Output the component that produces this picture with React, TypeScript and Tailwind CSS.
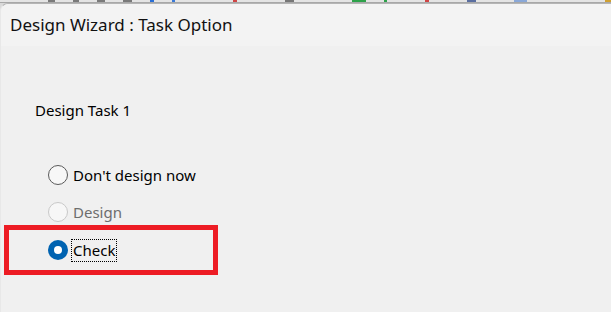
const font = { fontFamily: '"Noto Sans", "Open Sans", sans-serif' };

function Radio({ state }: { state: "off" | "disabled" | "on" }) {
  if (state === "on") {
    return (
      <span className="flex h-[20px] w-[20px] items-center justify-center rounded-full bg-[#0063b1]">
        <span className="h-[8px] w-[8px] rounded-full bg-white" />
      </span>
    );
  }
  return (
    <span
      className={
        state === "off"
          ? "h-[20px] w-[20px] rounded-full border border-[#5a5a5a] bg-[#f7f7f7]"
          : "h-[20px] w-[20px] rounded-full border border-[#c9c9c9] bg-[#f7f7f7]"
      }
    />
  );
}

export default function App() {
  return (
    <div className="flex h-[312px] w-[611px] flex-col overflow-hidden bg-[#d9d9d9]" style={font}>
      {/* strip of the app toolbar behind the dialog */}
      <div className="flex h-[3px] shrink-0 items-end gap-[18px] border-b border-[#a8a8a8] bg-[#e4e4e4] pl-[48px]">
        <span className="h-[2px] w-[8px] bg-[#7a7a7a]" />
        <span className="h-[2px] w-[6px] bg-[#7a7a7a]" />
        <span className="h-[2px] w-[8px] bg-[#7a7a7a]" />
        <span className="h-[2px] w-[10px] bg-[#7a7a7a]" />
        <span className="h-[2px] w-[4px] bg-[#2a6fd6]" />
        <span className="h-[2px] w-[4px] bg-[#3a7ad8]" />
        <span className="ml-[40px] h-[2px] w-[4px] bg-[#d04545]" />
        <span className="ml-[30px] h-[2px] w-[10px] bg-[#777]" />
        <span className="ml-[40px] h-[3px] w-[14px] bg-[#2da24a]" />
        <span className="h-[3px] w-[4px] bg-[#2da24a]" />
        <span className="ml-[20px] h-[3px] w-[4px] bg-[#d04545]" />
        <span className="ml-[20px] h-[3px] w-[10px] bg-[#5a6ea0]" />
        <span className="ml-[20px] h-[3px] w-[14px] bg-[#8aa8d8]" />
        <span className="ml-[60px] h-[3px] w-[6px] bg-[#d0a030]" />
      </div>

      <div className="flex flex-1 flex-col rounded-tl-[8px] border-l border-t border-l-[#e8e8e8] border-t-[#b5b5b5] bg-[#f0f0f0]">
        <div className="flex h-[42px] shrink-0 items-center rounded-tl-[8px] bg-[#f3f3f3] pl-[9px]">
          <span className="text-[17px] leading-[22px] text-[#111]">Design Wizard : Task Option</span>
        </div>

        <div className="flex flex-col pl-[3px] pt-[54px]">
          <div className="pl-[31px] text-[15px] leading-[20px] text-black">Design Task 1</div>

          <div className="mt-[45px] flex flex-col gap-[17px] pl-[44px]">
            <div className="flex h-[20px] items-center gap-[5px]">
              <Radio state="off" />
              <span className="text-[15px] leading-[20px] text-black">Don't design now</span>
            </div>
            <div className="flex h-[20px] items-center gap-[5px]">
              <Radio state="disabled" />
              <span className="text-[15px] leading-[20px] text-[#6d6d6d]">Design</span>
            </div>
          </div>

          <div className="mt-[3px] flex h-[50px] w-[214px] items-center border-[5px] border-[#ed1c24] pl-[39px]">
            <Radio state="on" />
            <span className="ml-[3px] border border-dotted border-black px-[1px] text-[15px] leading-[21px] text-black">
              Check
            </span>
          </div>
        </div>
      </div>
    </div>
  );
}
